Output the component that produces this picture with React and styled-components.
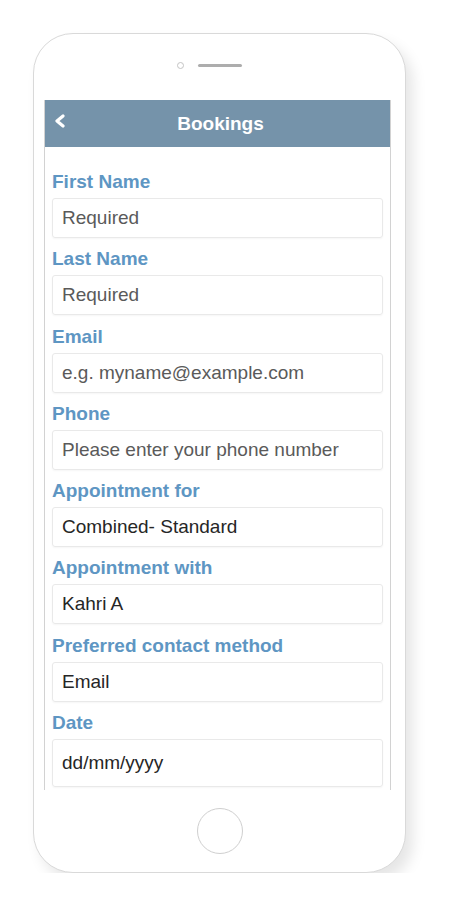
import styled, { createGlobalStyle } from "styled-components";

const GlobalStyle = createGlobalStyle`
  body {
    margin: 0;
    background: #fff;
    font-family: "Liberation Sans", Arial, sans-serif;
  }
`;

const fields = [
  { label: "First Name", text: "Required", placeholder: true },
  { label: "Last Name", text: "Required", placeholder: true },
  { label: "Email", text: "e.g. myname@example.com", placeholder: true },
  { label: "Phone", text: "Please enter your phone number", placeholder: true },
  { label: "Appointment for", text: "Combined- Standard" },
  { label: "Appointment with", text: "Kahri A" },
  { label: "Preferred contact method", text: "Email" },
  { label: "Date", text: "dd/mm/yyyy", tall: true },
];

export default function App() {
  return (
    <>
      <GlobalStyle />
      <Page>
        <Phone>
          <TopBezel>
            <Camera />
            <Speaker />
          </TopBezel>
          <Screen>
            <Header>
              <BackButton>
                <svg width="12" height="14" viewBox="0 0 12 14">
                  <polyline
                    points="9,2 3,7 9,12"
                    fill="none"
                    stroke="#fff"
                    strokeWidth="3.2"
                    strokeLinecap="round"
                    strokeLinejoin="round"
                  />
                </svg>
              </BackButton>
              <Title>Bookings</Title>
              <span />
            </Header>
            <Form>
              {fields.map((f) => (
                <Field key={f.label}>
                  <Label>{f.label}</Label>
                  <Input $placeholder={f.placeholder} $tall={f.tall}>
                    {f.text}
                  </Input>
                </Field>
              ))}
            </Form>
          </Screen>
          <BottomBezel>
            <HomeButton />
          </BottomBezel>
        </Phone>
      </Page>
    </>
  );
}

const Page = styled.div`
  padding: 33px 0 0 33px;
`;

const Phone = styled.div`
  box-sizing: border-box;
  width: 373px;
  height: 840px;
  border: 1.5px solid #d9d9d9;
  border-radius: 40px;
  background: #fff;
  box-shadow: 7px 9px 14px rgba(0, 0, 0, 0.1);
  display: flex;
  flex-direction: column;
`;

const TopBezel = styled.div`
  height: 66px;
  display: flex;
  align-items: center;
  justify-content: center;
  gap: 14px;
  padding: 0 20px 4px 0;
  box-sizing: border-box;
`;

const Camera = styled.div`
  width: 5px;
  height: 5px;
  border: 1.5px solid #c4c4c4;
  border-radius: 50%;
`;

const Speaker = styled.div`
  width: 44px;
  height: 3px;
  border-radius: 2px;
  background: #adadad;
`;

const Screen = styled.div`
  box-sizing: border-box;
  width: 347px;
  height: 690px;
  margin-left: 10px;
  border-left: 1px solid #d2d2d2;
  border-right: 1px solid #d2d2d2;
  overflow: hidden;
  display: flex;
  flex-direction: column;
`;

const Header = styled.div`
  height: 47px;
  flex-shrink: 0;
  background: #7593aa;
  display: grid;
  grid-template-columns: 1fr auto 1fr;
  align-items: center;
`;

const BackButton = styled.div`
  display: flex;
  align-items: center;
  padding: 0 0 5px 9px;
`;

const Title = styled.div`
  color: #fff;
  font-weight: bold;
  font-size: 19px;
  padding-left: 6px;
`;

const Form = styled.div`
  padding: 24px 7px 0;
  display: flex;
  flex-direction: column;
  gap: 10.3px;
`;

const Field = styled.div`
  display: flex;
  flex-direction: column;
  gap: 6px;
`;

const Label = styled.div`
  font-size: 19px;
  line-height: 21px;
  font-weight: bold;
  color: #5e96c3;
`;

const Input = styled.div`
  box-sizing: border-box;
  height: ${(p) => (p.$tall ? "48px" : "40px")};
  border: 1px solid #e9e9e9;
  border-radius: 3px;
  box-shadow: 0 1px 2px rgba(0, 0, 0, 0.04);
  padding: 0 9px;
  display: flex;
  align-items: center;
  font-size: 19px;
  color: ${(p) => (p.$placeholder ? "#5a5a5a" : "#262626")};
`;

const BottomBezel = styled.div`
  flex: 1;
  display: flex;
  align-items: center;
  justify-content: center;
`;

const HomeButton = styled.div`
  width: 44px;
  height: 44px;
  border: 1.5px solid #cfcfcf;
  border-radius: 50%;
`;
